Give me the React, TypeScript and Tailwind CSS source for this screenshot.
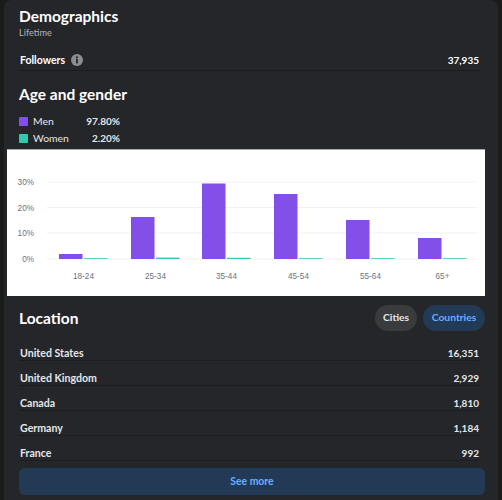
import React from "react";

const locations = [
  ["United States", "16,351"],
  ["United Kingdom", "2,929"],
  ["Canada", "1,810"],
  ["Germany", "1,184"],
  ["France", "992"],
];

const bars = [
  { label: "18-24", x: 52, top: 104, teal: 0.8 },
  { label: "25-34", x: 124, top: 67, teal: 1.4 },
  { label: "35-44", x: 195, top: 33.5, teal: 1.2 },
  { label: "45-54", x: 267, top: 44, teal: 0.8 },
  { label: "55-64", x: 339, top: 70, teal: 0.8 },
  { label: "65+", x: 411, top: 88, teal: 0.8 },
];

function Chart() {
  const grid = [32, 57.5, 83, 109];
  const ticks = ["30%", "20%", "10%", "0%"];
  return (
    <svg width="478" height="146" viewBox="0 0 478 146" className="block">
      <rect width="478" height="146" fill="#ffffff" />
      {grid.map((y, i) => (
        <g key={y}>
          <line x1="40" x2="470" y1={y} y2={y} stroke="#f0f1f3" strokeWidth="1" />
          <text x="27" y={y + 3} textAnchor="end" fontSize="8.2" fill="#6b7280" fontFamily="'Liberation Sans', sans-serif">
            {ticks[i]}
          </text>
        </g>
      ))}
      {bars.map((b) => (
        <g key={b.label}>
          <rect x={b.x} y={b.top} width="23.5" height={109 - b.top} fill="#8250e8" />
          <rect x={b.x + 25} y={109 - b.teal} width="23.5" height={b.teal} fill="#2cc9ae" />
          <text x={b.x + 24.5} y="129" textAnchor="middle" fontSize="8.2" fill="#6b7280" fontFamily="'Liberation Sans', sans-serif">
            {b.label}
          </text>
        </g>
      ))}
    </svg>
  );
}

function InfoIcon() {
  return (
    <svg width="12" height="12" viewBox="0 0 12 12" className="block">
      <circle cx="6" cy="6" r="6" fill="#8a8d91" />
      <rect x="5.1" y="5" width="1.8" height="4.4" fill="#25262a" />
      <circle cx="6" cy="3.3" r="1.1" fill="#25262a" />
    </svg>
  );
}

export default function App() {
  return (
    <div className="w-[502px] h-[500px] overflow-hidden bg-[#1b1b1c] pl-1 pr-1 font-['Lato','Open_Sans',sans-serif] text-[#e4e6eb]">
      <div className="h-[500px] w-[494px] rounded-t-lg bg-[#25262a] px-[15px] pt-[6px]">
        <h1 className="text-[15.5px] leading-[20px] font-bold text-white">Demographics</h1>
        <p className="text-[9.2px] leading-[14px] text-[#b0b3b8]">Lifetime</p>

        <div className="mt-[9px] flex h-[22px] w-[460px] items-center justify-between border-b border-[#1c1d20] pl-[1px] pt-[1px] text-[10.5px] leading-[14px] font-bold text-white">
          <div className="flex items-center gap-[6px]">
            <span>Followers</span>
            <InfoIcon />
          </div>
          <span className="text-[10px] leading-[14px]">37,935</span>
        </div>

        <h2 className="mt-[13px] text-[15.5px] leading-[20px] font-bold text-white">Age and gender</h2>

        <div className="mt-[9px] flex w-[101px] items-center text-[10.4px] leading-[17px]">
          <span className="h-[9px] w-[9px] rounded-[1px] bg-[#8250e8]" />
          <span className="ml-[5px] flex-1 text-[#e4e6eb]">Men</span>
          <span className="text-[10px] font-bold">97.80%</span>
        </div>
        <div className="flex w-[101px] items-center text-[10.4px] leading-[17px]">
          <span className="h-[9px] w-[9px] rounded-[1px] bg-[#33c9b0]" />
          <span className="ml-[5px] flex-1 text-[#e4e6eb]">Women</span>
          <span className="text-[10px] font-bold">2.20%</span>
        </div>

        <div className="-ml-3 mt-[2px] w-[478px] border-t border-[#a8a8a8]">
          <Chart />
        </div>

        <div className="mt-[9px] flex h-[26px] items-center justify-between">
          <h2 className="text-[15.5px] leading-[20px] font-bold text-white">Location</h2>
          <div className="-mr-[2px] flex gap-[6px] text-[10.3px] font-bold">
            <span className="flex h-[26px] w-[42px] items-center justify-center rounded-full bg-[#3a3b3c] text-[#e4e6eb]">Cities</span>
            <span className="flex h-[26px] w-[62px] items-center justify-center rounded-full bg-[#233a56] text-[#6aaeff]">Countries</span>
          </div>
        </div>

        <div className="mt-[5px]">
          {locations.map(([name, value]) => (
            <div
              key={name}
              className="flex h-[25px] w-[460px] items-center justify-between border-b border-[#1c1d20] pl-[1px] pt-[10px] text-[10.6px] leading-[14px] font-bold text-[#e4e6eb]"
            >
              <span>{name}</span>
              <span className="text-[10px] leading-[14px]">{value}</span>
            </div>
          ))}
        </div>

        <div className="mt-[7px] flex h-[27px] w-[466px] items-center justify-center rounded-md bg-[#233a56] pt-[1px] text-[10.4px] font-bold text-[#6aaeff]">
          See more
        </div>
      </div>
    </div>
  );
}
